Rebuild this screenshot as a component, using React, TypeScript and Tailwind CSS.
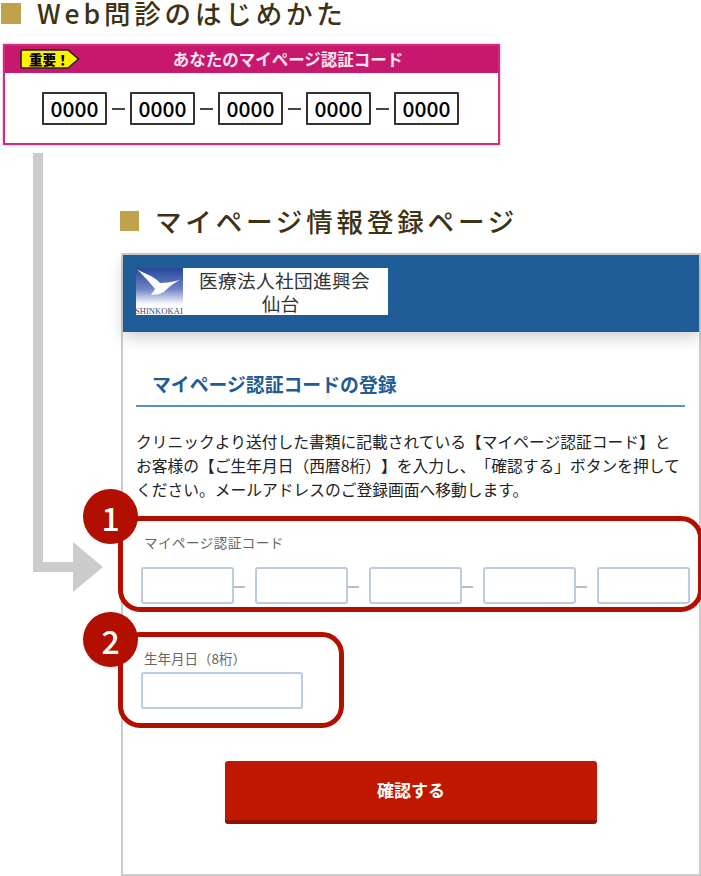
const font = "[font-family:'Noto_Sans_CJK_JP','Noto_Sans',sans-serif]";

function Heading({ text, className, square }: { text: string; className: string; square: string }) {
  return (
    <div className={`flex items-center ${className}`}>
      <span className={`shrink-0 bg-[#bfa24b] ${square}`} />
      <h2 className="ml-4 text-[26.5px] leading-[26px] font-medium tracking-[3.85px] whitespace-nowrap text-[#3d3213]">{text}</h2>
    </div>
  );
}

function CodeBox() {
  return (
    <div className="flex h-[33px] w-[65px] items-center justify-center rounded-[1px] border-2 border-[#333] bg-white text-[21px] font-medium text-black">
      0000
    </div>
  );
}

function Badge({ n, className }: { n: string; className: string }) {
  return (
    <div className={`absolute left-[-40px] flex h-[55px] w-[55px] items-center justify-center rounded-full bg-[#b30f00] text-[32px] font-medium text-white ${className}`}>
      {n}
    </div>
  );
}

function Logo() {
  return (
    <div className="flex h-[47px] w-[252px] bg-white">
      <svg width="47" height="47" viewBox="0 0 47 47">
        <defs>
          <linearGradient id="sky" x1="0" y1="0" x2="0" y2="1">
            <stop offset="0" stopColor="#26479c" />
            <stop offset="0.45" stopColor="#6f84c4" />
            <stop offset="0.78" stopColor="#ffffff" />
          </linearGradient>
        </defs>
        <rect width="47" height="47" fill="url(#sky)" />
        <path d="M1 1 C8 6 17 7 24 15 C30 15 37 14 44 12 C36 16 32 20 28 24 C24 26 20 27 15 27 L19 21 C14 14 7 8 1 1 Z" fill="#fff" />
        <text x="-1" y="46" fontSize="8.6" fontFamily="'Liberation Serif',serif" fill="#3b4a7a">SHINKOKAI</text>
      </svg>
      <div className="flex-1 text-center text-[18.7px] leading-[23px] font-normal text-[#333]">
        <div className="pr-[2px] tracking-[0.3px]">医療法人社団進興会</div>
        <div className="pr-[10px]">仙台</div>
      </div>
    </div>
  );
}

function InputBox({ className }: { className: string }) {
  return <div className={`h-[37px] rounded-[3px] border-2 border-[#bccbdf] bg-white ${className}`} />;
}

function Dash() {
  return <span className="mt-[2px] mr-[10px] h-[2px] w-[11px] bg-[#bbb]" />;
}

function CodeDash() {
  return <span className="h-[2px] w-[13px] bg-[#444]" />;
}

export default function App() {
  return (
    <div className={`relative h-[876px] w-[701px] overflow-hidden bg-white [text-spacing-trim:space-all] ${font}`}>
      {/* gray connector arrow */}
      <svg className="absolute top-[153px] left-[33px]" width="71" height="440" viewBox="0 0 71 440">
        <path d="M0 0 H10 V409 H40 V389 L70 414 L40 439 V419 H0 Z" fill="#cccccc" />
      </svg>

      <Heading text="Web問診のはじめかた" square="h-[21px] w-5" className="ml-px h-[26px]" />

      {/* code card */}
      <div className="mt-[18px] ml-[3px] h-[101px] w-[497px] border-2 border-[#cf2d82] shadow-[0_0_2px_rgba(200,24,110,0.5)]">
        <div className="relative flex h-[27px] items-center justify-center bg-[#c8186e] pl-[73px] text-[16.5px] leading-none font-bold text-[#fbe6f0]">
          あなたのマイページ認証コード
          <div className="absolute top-[3px] left-[15px] flex h-[20px] w-[60px]">
            <svg className="absolute inset-0" width="60" height="20" viewBox="0 0 60 20">
              <path d="M2.5 1 H48 L58.5 10 L48 19 H2.5 Q1 19 1 17.5 V2.5 Q1 1 2.5 1 Z" fill="#fff200" stroke="#222" strokeWidth="1.6" />
            </svg>
            <span className="relative ml-[9px] text-[13.5px] leading-[20px] font-black whitespace-nowrap text-black">重要！</span>
          </div>
        </div>
        <div className="flex items-center gap-[5px] pt-[19px] pl-[37px]">
          <CodeBox />
          <CodeDash />
          <CodeBox />
          <CodeDash />
          <CodeBox />
          <CodeDash />
          <CodeBox />
          <CodeDash />
          <CodeBox />
        </div>
      </div>

      <Heading text="マイページ情報登録ページ" square="h-5 w-[19px]" className="mt-[61px] ml-[120px] h-[30px]" />

      {/* phone screen */}
      <div className="mt-[17px] ml-[121px] h-[623px] w-[580px] border-2 border-[#cccccc] bg-white">
        <div className="flex h-[77px] items-start bg-[#1f5c96] pt-[13px] pl-[13px] shadow-[0_6px_14px_rgba(0,0,0,0.18)]">
          <Logo />
        </div>

        <div className="pt-[38px]">
          <h3 className="mr-[14px] ml-[13px] border-b-2 border-[#5b90c3] pb-[7px] pl-[16px] text-[18.85px] leading-[28px] font-bold whitespace-nowrap text-[#1f5c96]">
            マイページ認証コードの登録
          </h3>
          <p className="mt-[23px] ml-[13px] text-[15.75px] leading-[24px] whitespace-nowrap text-[#222]">
            クリニックより送付した書類に記載されている【マイページ認証コード】と
            <br />
            お客様の【ご生年月日（西暦8桁）】を入力し、「確認する」ボタンを押して
            <br />
            ください。メールアドレスのご登録画面へ移動します。
          </p>

          {/* step 1 */}
          <div className="relative mt-[14px] ml-[-5px] h-[96px] w-[585px] rounded-[22px] border-[5px] border-[#b30f00] pt-[12px] pl-[18px]">
            <Badge n="1" className="top-[-32px]" />
            <div className="pl-[3px] text-[13.5px] leading-[18px] tracking-[0.5px] text-[#666]">マイページ認証コード</div>
            <div className="mt-[16px] flex items-center">
              <InputBox className="w-[93px]" />
              <Dash />
              <InputBox className="w-[93px]" />
              <Dash />
              <InputBox className="w-[93px]" />
              <Dash />
              <InputBox className="w-[93px]" />
              <Dash />
              <InputBox className="w-[93px]" />
            </div>
          </div>

          {/* step 2 */}
          <div className="relative mt-[20px] ml-[-5px] h-[96px] w-[226px] rounded-[22px] border-[5px] border-[#b30f00] pt-[12px] pl-[18px]">
            <Badge n="2" className="top-[-25px]" />
            <div className="pl-[3px] text-[13.5px] leading-[18px] text-[#666]">生年月日（8桁）</div>
            <InputBox className="mt-[5px] w-[162px]" />
          </div>

          <button className="mt-[33px] ml-[102px] block h-[63px] w-[372px] rounded-[3px] border-b-4 border-[#930f00] bg-[#c01800] pb-[2px] text-[17px] font-bold text-white">
            確認する
          </button>
        </div>
      </div>
    </div>
  );
}
